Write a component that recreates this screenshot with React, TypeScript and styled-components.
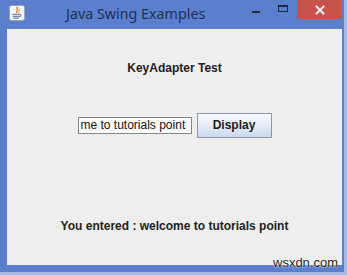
import React from "react";
import styled, { createGlobalStyle } from "styled-components";

const GlobalStyle = createGlobalStyle`
  html, body { margin: 0; padding: 0; }
  body { background: #a9bbe0; font-family: "Liberation Sans", Arial, sans-serif; }
`;

const Screen = styled.div`
  position: relative;
  width: 347px;
  height: 275px;
  overflow: hidden;
  background: #a9bbe0;
`;

const Window = styled.div`
  width: 344px;
  height: 272px;
  background: #5b7fcd;
  display: flex;
  flex-direction: column;
`;

const TitleBar = styled.div`
  height: 29px;
  display: flex;
  align-items: flex-start;
  padding-right: 2px;
  flex-shrink: 0;
`;

const AppIcon = styled.svg`
  margin: 5px 0 0 9px;
  flex-shrink: 0;
`;

const Title = styled.div`
  margin: 4px 0 0 41px;
  font-family: "Noto Sans", "Open Sans", sans-serif;
  font-size: 14.3px;
  line-height: 20px;
  color: #22304f;
  white-space: nowrap;
`;

const Spacer = styled.div`
  flex: 1;
`;

const CaptionButton = styled.div<{ $w: number; $bg?: string }>`
  width: ${(p) => p.$w}px;
  height: 19px;
  background: ${(p) => p.$bg ?? "transparent"};
  display: flex;
  align-items: center;
  justify-content: center;
`;

const MinGlyph = styled.div`
  width: 8px;
  height: 2px;
  margin-top: 4px;
  margin-right: 5px;
  background: #1b2744;
`;

const MaxGlyph = styled.div`
  width: 10px;
  height: 7px;
  box-sizing: border-box;
  border: 1px solid #1b2744;
  border-top-width: 2px;
  margin-top: -2px;
  margin-right: 2px;
`;

const Content = styled.div`
  flex: 1;
  margin: 0 2px 7px 7px;
  background: #eeeeee;
  display: grid;
  grid-template-rows: repeat(3, 1fr);
`;

const CenterLabel = styled.div`
  display: flex;
  align-items: center;
  justify-content: center;
  font-family: "Liberation Sans", Arial, sans-serif;
  font-weight: bold;
  font-size: 12px;
  color: #222222;
`;

const FlowRow = styled.div`
  display: flex;
  justify-content: center;
  align-items: center;
  align-self: start;
  gap: 5px;
  padding-top: 5px;
`;

const TextField = styled.div`
  width: 114px;
  height: 17px;
  box-sizing: border-box;
  border: 1px solid #7f8790;
  background: #ffffff;
  display: flex;
  align-items: center;
  overflow: hidden;
  padding-left: 2px;
  font-family: "Liberation Sans", Arial, sans-serif;
  font-size: 12px;
  color: #111111;
  white-space: nowrap;
`;

const Button = styled.div`
  width: 75px;
  height: 25px;
  box-sizing: border-box;
  border: 1px solid #8a97ab;
  background: linear-gradient(to bottom, #f7f9fc 0%, #e6edf6 45%, #cbd9eb 100%);
  display: flex;
  align-items: center;
  justify-content: center;
  font-family: "Liberation Sans", Arial, sans-serif;
  font-weight: bold;
  font-size: 12px;
  color: #1c1c1c;
`;

const Watermark = styled.div`
  position: absolute;
  left: 273px;
  top: 255px;
  font-family: "Liberation Sans", Arial, sans-serif;
  font-size: 13px;
  line-height: 15px;
  color: #222222;
  text-shadow: 0 0 2px #ffffff, 0 0 1px #ffffff;
`;

function JavaIcon() {
  return (
    <AppIcon width="16" height="16" viewBox="0 0 16 16">
      <rect x="0.5" y="0.5" width="15" height="15" rx="2" fill="#f6f7f9" stroke="#9ba7b9" />
      <path d="M8.5 1.8 C6.2 3.8 10.4 4.8 7.2 8" fill="none" stroke="#e4761b" strokeWidth="1.3" />
      <path d="M10.3 3.6 C9.2 5 11.2 5.6 9.6 7.6" fill="none" stroke="#e4761b" strokeWidth="1" />
      <path d="M3.5 9.3 H11" stroke="#4f6f96" strokeWidth="1" />
      <path d="M3.5 11.3 H11" stroke="#4f6f96" strokeWidth="1" />
      <path d="M4.5 13.1 H10" stroke="#4f6f96" strokeWidth="1" />
      <path d="M11 9.3 Q13.5 9.8 11 11.8" fill="none" stroke="#4f6f96" strokeWidth="1" />
    </AppIcon>
  );
}

function CloseGlyph() {
  return (
    <svg width="10" height="10" viewBox="0 0 10 10">
      <path d="M1.5 1.5 L8.5 8.5 M8.5 1.5 L1.5 8.5" stroke="#ffffff" strokeWidth="1.8" strokeLinecap="square" />
    </svg>
  );
}

export default function App() {
  return (
    <>
      <GlobalStyle />
      <Screen>
        <Window>
          <TitleBar>
            <JavaIcon />
            <Title>Java Swing Examples</Title>
            <Spacer />
            <CaptionButton $w={26}>
              <MinGlyph />
            </CaptionButton>
            <CaptionButton $w={26}>
              <MaxGlyph />
            </CaptionButton>
            <CaptionButton $w={45} $bg="#c8524c">
              <CloseGlyph />
            </CaptionButton>
          </TitleBar>
          <Content>
            <CenterLabel>KeyAdapter Test</CenterLabel>
            <FlowRow>
              <TextField>me to tutorials point</TextField>
              <Button>Display</Button>
            </FlowRow>
            <CenterLabel>You entered : welcome to tutorials point</CenterLabel>
          </Content>
        </Window>
        <Watermark>wsxdn.com</Watermark>
      </Screen>
    </>
  );
}
